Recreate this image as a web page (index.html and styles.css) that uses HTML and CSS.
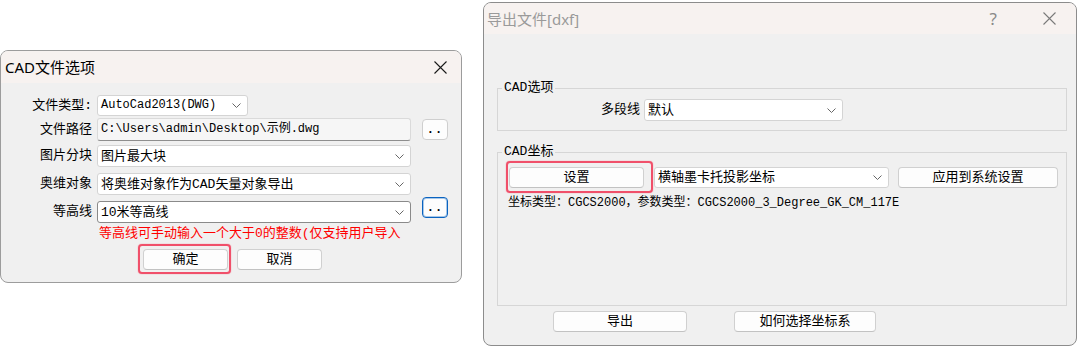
FILE: index.html
```html
<!DOCTYPE html>
<html lang="zh-CN">
<head>
<meta charset="utf-8">
<title>CAD</title>
<link rel="stylesheet" href="styles.css">
</head>
<body>
<div class="dlg dlg-cad">
  <div class="titlebar">
    <span class="title">CAD文件选项</span>
    <svg class="close" width="13" height="13" viewBox="0 0 13 13"><path d="M0.5 0.5 L12.5 12.5 M12.5 0.5 L0.5 12.5" stroke="#1a1a1a" stroke-width="1.1" fill="none"/></svg>
  </div>
  <div class="cad-body">
    <div class="row row1">
      <span class="lbl">文件类型:</span>
      <div class="combo w-short ascii"><span class="val">AutoCad2013(DWG)</span><svg class="chev" width="9" height="5" viewBox="0 0 9 5"><path d="M0.5 0.5 L4.5 4.5 L8.5 0.5" stroke="#666" fill="none"/></svg></div>
    </div>
    <div class="row row2">
      <span class="lbl">文件路径</span>
      <div class="field w-long ascii"><span class="val">C:\Users\admin\Desktop\示例.dwg</span></div>
      <div class="dots">..</div>
    </div>
    <div class="row row3">
      <span class="lbl">图片分块</span>
      <div class="combo w-long"><span class="val">图片最大块</span><svg class="chev" width="9" height="5" viewBox="0 0 9 5"><path d="M0.5 0.5 L4.5 4.5 L8.5 0.5" stroke="#666" fill="none"/></svg></div>
    </div>
    <div class="row row4">
      <span class="lbl">奥维对象</span>
      <div class="combo w-long"><span class="val">将奥维对象作为CAD矢量对象导出</span><svg class="chev" width="9" height="5" viewBox="0 0 9 5"><path d="M0.5 0.5 L4.5 4.5 L8.5 0.5" stroke="#666" fill="none"/></svg></div>
    </div>
    <div class="row row5">
      <span class="lbl">等高线</span>
      <div class="combo edit w-long"><span class="val">10米等高线</span><svg class="chev" width="9" height="5" viewBox="0 0 9 5"><path d="M0.5 0.5 L4.5 4.5 L8.5 0.5" stroke="#666" fill="none"/></svg></div>
      <div class="dots focus">..</div>
    </div>
    <div class="hint">等高线可手动输入一个大于0的整数(仅支持用户导入</div>
    <div class="cad-actions">
      <div class="mark mark-ok"><div class="btn btn-ok">确定</div></div>
      <div class="btn btn-cancel">取消</div>
    </div>
  </div>
</div>

<div class="dlg dlg-dxf">
  <div class="titlebar dxf-bar">
    <span class="title dim">导出文件[dxf]</span>
    <div class="tb-icons">
      <span class="help">?</span>
      <svg class="close" width="13" height="13" viewBox="0 0 13 13"><path d="M0.5 0.5 L12.5 12.5 M12.5 0.5 L0.5 12.5" stroke="#7a7a7a" stroke-width="1.1" fill="none"/></svg>
    </div>
  </div>
  <div class="dxf-body">
    <fieldset class="group g1">
      <legend>CAD选项</legend>
      <div class="row g1-row">
        <span class="lbl lbl-poly">多段线</span>
        <div class="combo w-poly"><span class="val">默认</span><svg class="chev" width="9" height="5" viewBox="0 0 9 5"><path d="M0.5 0.5 L4.5 4.5 L8.5 0.5" stroke="#666" fill="none"/></svg></div>
      </div>
    </fieldset>
    <fieldset class="group g2">
      <legend>CAD坐标</legend>
      <div class="g2-inner">
        <div class="row g2-row">
          <div class="mark mark-set"><div class="btn btn-set">设置</div></div>
          <div class="combo w-proj"><span class="val">横轴墨卡托投影坐标</span><svg class="chev" width="9" height="5" viewBox="0 0 9 5"><path d="M0.5 0.5 L4.5 4.5 L8.5 0.5" stroke="#666" fill="none"/></svg></div>
          <div class="btn btn-apply">应用到系统设置</div>
        </div>
        <div class="info">坐标类型：CGCS2000，参数类型：CGCS2000_3_Degree_GK_CM_117E</div>
      </div>
    </fieldset>
    <div class="dxf-actions">
      <div class="btn btn-export">导出</div>
      <div class="btn btn-how">如何选择坐标系</div>
    </div>
  </div>
</div>
</body>
</html>
```

FILE: styles.css
```css
* { box-sizing: border-box; }

body {
  margin: 0;
  background: #ffffff;
  display: flex;
  align-items: flex-start;
  font-family: "Liberation Mono", "Noto Sans CJK SC", monospace;
  font-size: 13px;
  color: #000;
}

.dlg {
  background: #f0f0f0;
  border: 1px solid #9c9c9c;
  border-radius: 8px;
  overflow: hidden;
}

.titlebar {
  display: flex;
  align-items: center;
  justify-content: space-between;
  background: #f7f2f0;
  font-family: "Noto Sans", "Noto Sans CJK SC", sans-serif;
  font-size: 15px;
}

.title { line-height: 18px; }
.title.dim { color: #9a9a9a; }
.close { display: block; }

/* ---------- left dialog ---------- */
.dlg-cad {
  width: 462px;
  height: 233px;
  margin-top: 50px;
}

.dlg-cad .titlebar {
  height: 32px;
  padding: 0 14px 0 4px;
}

.cad-body {
  padding-top: 12px;
  display: flex;
  flex-direction: column;
}

.row {
  display: flex;
  align-items: center;
}

.lbl {
  width: 91px;
  margin-right: 5px;
  text-align: right;
  white-space: nowrap;
  line-height: 16px;
}

.row1 { height: 21px; }
.row2 { height: 23px; margin-top: 2px; }
.row3 { height: 22px; margin-top: 4px; }
.row4 { height: 22px; margin-top: 6px; }
.row5 { height: 22px; margin-top: 6px; }

.combo, .field {
  height: 100%;
  display: flex;
  align-items: center;
  justify-content: space-between;
  padding: 0 6px 0 3px;
  background: #ffffff;
  border: 1px solid #d4d4d4;
  border-radius: 3px;
  font-size: 13px;
  white-space: nowrap;
}

.combo.ascii, .field.ascii { font-size: 12px; }

.combo .val, .field .val { line-height: 15px; }
.chev { flex: none; display: block; }

.field {
  background: #f6f6f6;
  border-color: #dadada;
  border-bottom-color: #8e8e8e;
}

.combo.edit {
  border-color: #8a8a8a;
}

.w-short { width: 151px; }
.w-long { width: 314px; }

.dots {
  width: 26px;
  height: 21px;
  margin-left: 11px;
  display: flex;
  align-items: flex-end;
  justify-content: center;
  padding-bottom: 4px;
  background: #fdfdfd;
  border: 1px solid #cfcfcf;
  border-radius: 4px;
  font-size: 12px;
  line-height: 10px;
  letter-spacing: 1px;
  font-weight: bold;
}

.dots.focus {
  align-self: flex-start;
  margin-top: -4px;
  border-color: #0a63c0;
  box-shadow: inset 0 0 0 1px rgba(10, 99, 192, 0.35);
}

.hint {
  margin-top: 4px;
  margin-left: 98px;
  color: #ff0000;
  font-size: 13px;
  line-height: 14px;
  white-space: nowrap;
}

.cad-actions {
  margin-top: 3px;
  margin-left: 137px;
  display: flex;
  align-items: center;
}

.mark {
  border: 2px solid #f0506a;
  border-radius: 4px;
  box-shadow: 0 0 1px #f0506a;
}

.mark-ok { padding: 3px 1px 2px 3px; }

.btn {
  height: 21px;
  display: flex;
  align-items: center;
  justify-content: center;
  background: #fdfdfd;
  border: 1px solid #d0d0d0;
  border-bottom-color: #c2c2c2;
  border-radius: 4px;
  font-size: 13px;
  line-height: 15px;
  white-space: nowrap;
}

.btn-ok, .btn-cancel { width: 85px; }
.btn-cancel { margin-left: 6px; }

/* ---------- right dialog ---------- */
.dlg-dxf {
  width: 594px;
  height: 344px;
  margin-top: 2px;
  margin-left: 21px;
  border-color: #8c8c8c;
}

.dxf-bar {
  height: 31px;
  padding: 0 20px 0 3px;
}

.tb-icons {
  display: flex;
  align-items: center;
  gap: 46px;
}

.help {
  color: #8a8a8a;
  font-size: 17px;
  line-height: 18px;
}

.dxf-body {
  display: flex;
  flex-direction: column;
  padding-top: 47px;
  padding-left: 13px;
}

.group {
  width: 570px;
  margin: 0;
  padding: 0;
  border: 1px solid #d6d6d6;
  min-inline-size: 0;
}

.group legend {
  margin-left: 4px;
  padding: 0 2px;
  font-size: 13px;
  line-height: 14px;
}

.g1-row {
  height: 22px;
  margin-top: 4px;
  margin-bottom: 9px;
}

.lbl-poly {
  width: 142px;
  margin-right: 4px;
}

.w-poly { width: 199px; }

.g2 { margin-top: 14px; }

.g2-inner {
  height: 146px;
  display: flex;
  flex-direction: column;
}

.g2-row {
  margin-top: 2px;
  padding-left: 8px;
}

.mark-set { padding: 4px 7px 3px 1px; }
.btn-set { width: 135px; }

.w-proj {
  width: 235px;
  height: 21px;
  margin-left: 1px;
}

.btn-apply {
  width: 160px;
  margin-left: 9px;
}

.info {
  margin-top: 3px;
  margin-left: 10px;
  font-size: 12px;
  line-height: 14px;
  white-space: nowrap;
}

.dxf-actions {
  display: flex;
  margin-top: 5px;
  margin-left: 56px;
}

.btn-export { width: 134px; }
.btn-how { width: 142px; margin-left: 47px; }
```
